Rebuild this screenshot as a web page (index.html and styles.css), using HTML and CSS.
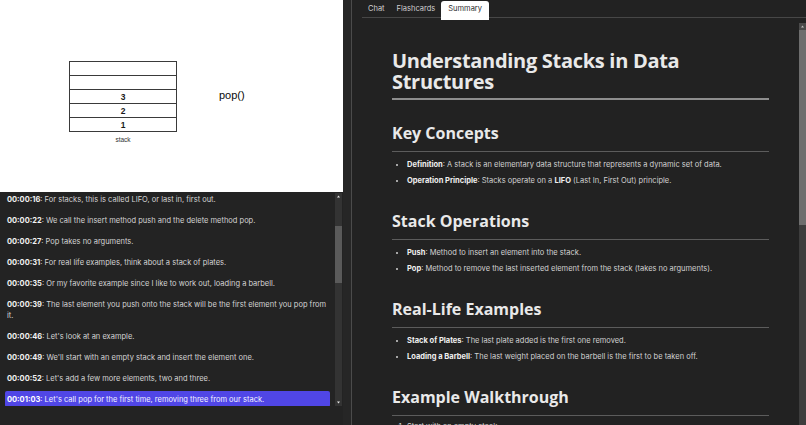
FILE: index.html
```html
<!DOCTYPE html>
<html lang="en">
<head>
<meta charset="utf-8">
<title>Stacks – Summary</title>
<link rel="stylesheet" href="styles.css">
</head>
<body>
<div class="app">
  <section class="left">
    <div class="video">
      <div class="stack-fig">
        <div class="stack-box">
          <div class="cell"></div>
          <div class="cell"></div>
          <div class="cell">3</div>
          <div class="cell">2</div>
          <div class="cell">1</div>
        </div>
        <div class="stack-label">stack</div>
      </div>
      <div class="pop-label">pop()</div>
    </div>
    <div class="transcript">
      <div class="t-list">
        <div class="t-item"><b>00:00:16</b>: For stacks, this is called LIFO, or last in, first out.</div>
        <div class="t-item"><b>00:00:22</b>: We call the insert method push and the delete method pop.</div>
        <div class="t-item"><b>00:00:27</b>: Pop takes no arguments.</div>
        <div class="t-item"><b>00:00:31</b>: For real life examples, think about a stack of plates.</div>
        <div class="t-item"><b>00:00:35</b>: Or my favorite example since I like to work out, loading a barbell.</div>
        <div class="t-item"><b>00:00:39</b>: The last element you push onto the stack will be the first element you pop from it.</div>
        <div class="t-item"><b>00:00:46</b>: Let's look at an example.</div>
        <div class="t-item"><b>00:00:49</b>: We'll start with an empty stack and insert the element one.</div>
        <div class="t-item"><b>00:00:52</b>: Let's add a few more elements, two and three.</div>
        <div class="t-item active"><b>00:01:03</b>: Let's call pop for the first time, removing three from our stack.</div>
      </div>
      <div class="sbar sbar-left">
        <div class="sbtn"><svg viewBox="0 0 7 7" width="7" height="7"><polygon points="2,4.5 5,4.5 3.5,2.5" fill="#e6e6e6"/></svg></div>
        <div class="strack"><div class="sthumb"></div></div>
        <div class="sbtn"><svg viewBox="0 0 7 7" width="7" height="7"><polygon points="2,2.5 5,2.5 3.5,4.5" fill="#e6e6e6"/></svg></div>
      </div>
    </div>
  </section>
  <div class="gutter"></div>
  <section class="right">
    <nav class="tabs">
      <div class="tab">Chat</div>
      <div class="tab">Flashcards</div>
      <div class="tab active">Summary</div>
    </nav>
    <div class="panel">
      <article class="summary">
        <h1>Understanding Stacks in Data Structures</h1>
        <h2>Key Concepts</h2>
        <ul>
          <li><b>Definition</b>: A stack is an elementary data structure that represents a dynamic set of data.</li>
          <li><b>Operation Principle</b>: Stacks operate on a <b>LIFO</b> (Last In, First Out) principle.</li>
        </ul>
        <h2>Stack Operations</h2>
        <ul>
          <li><b>Push</b>: Method to insert an element into the stack.</li>
          <li><b>Pop</b>: Method to remove the last inserted element from the stack (takes no arguments).</li>
        </ul>
        <h2>Real-Life Examples</h2>
        <ul>
          <li><b>Stack of Plates</b>: The last plate added is the first one removed.</li>
          <li><b>Loading a Barbell</b>: The last weight placed on the barbell is the first to be taken off.</li>
        </ul>
        <h2>Example Walkthrough</h2>
        <ol>
          <li>Start with an empty stack.</li>
          <li>Push 1, then 2, then 3.</li>
        </ol>
      </article>
      <div class="sbar sbar-right">
        <div class="sbtn"><svg viewBox="0 0 7 7" width="7" height="7"><polygon points="2,4.5 5,4.5 3.5,2.5" fill="#bdbdbd"/></svg></div>
        <div class="strack"><div class="sthumb"></div></div>
      </div>
    </div>
  </section>
</div>
</body>
</html>
```
FILE: styles.css
```css
html, body {
  margin: 0;
  padding: 0;
  overflow: hidden;
}
body {
  background: #222222;
  font-family: Inter, "Noto Sans", sans-serif;
  font-size: 7.5px;
  color: #d6d6d6;
  height: 425px;
}
.app {
  display: grid;
  grid-template-columns: 343px 8px 1fr;
  height: 425px;
  overflow: hidden;
}

/* ---------- left: video + transcript ---------- */
.left {
  display: flex;
  flex-direction: column;
  background: #232323;
}
.video {
  height: 192px;
  background: #ffffff;
  display: flex;
  align-items: flex-start;
  padding: 61px 0 0 69px;
  box-sizing: border-box;
  font-family: "Liberation Sans", Arial, sans-serif;
  color: #111;
}
.stack-fig {
  display: flex;
  flex-direction: column;
  align-items: center;
  width: 108px;
}
.stack-box {
  width: 108px;
  border: 1px solid #3a3a3a;
  border-bottom: none;
  box-sizing: border-box;
}
.cell {
  height: 13px;
  border-bottom: 1px solid #3a3a3a;
  display: flex;
  align-items: center;
  justify-content: center;
  font-weight: bold;
  font-size: 8.5px;
  color: #1a1a1a;
}
.stack-label {
  margin-top: 4px;
  font-size: 6.5px;
  color: #333;
}
.pop-label {
  margin: 28px 0 0 42px;
  font-size: 11px;
  line-height: 12px;
  color: #0a0a0a;
}

.transcript {
  height: 214px;
  display: flex;
  padding-right: 1px;
}
.t-list {
  flex: 1;
  overflow: hidden;
}
.t-item {
  margin: 0 5px 5px;
  padding: 2.5px 2px;
  line-height: 11px;
  border-radius: 2px;
  color: #d4d4d4;
}
.t-item:first-child {
  margin-top: -1px;
}
.t-item b {
  color: #f2f2f2;
  font-weight: 700;
}
.t-item.active {
  background: #5046e6;
  color: #f4f4ff;
}
.t-item.active b {
  color: #ffffff;
}

/* scrollbars */
.sbar {
  width: 7px;
  display: flex;
  flex-direction: column;
  background: #333333;
}
.sbtn {
  height: 7px;
  display: flex;
}
.strack {
  flex: 1;
  display: flex;
  flex-direction: column;
}
.sbar-left {
  margin-top: 1px;
}
.sbar-left .sthumb {
  margin-top: 26px;
  height: 57px;
  background: #5a5a5a;
}
.sbar-right {
  background: #3d3d3d;
}
.sbar-right .sbtn {
  background: #4a4a4a;
}
.sbar-right .sthumb {
  height: 195px;
  background: #6e6e6e;
}

.gutter {
  background: #262626;
}

/* ---------- right: tabs + summary ---------- */
.right {
  border-left: 1px solid #4b4b4b;
  display: flex;
  flex-direction: column;
  background: #222222;
  min-width: 0;
  min-height: 0;
}
.tabs {
  display: flex;
  margin: 1px 0 0 10px;
  height: 16px;
  border-bottom: 1px solid #474747;
}
.tab {
  padding: 0 6px;
  line-height: 16px;
  color: #d0d0d0;
}
.tab.active {
  background: #ffffff;
  color: #2b2b2b;
  border-radius: 3px 3px 0 0;
  height: 19px;
  margin-bottom: -3px;
  padding: 0 7px;
}
.panel {
  flex: 1;
  display: flex;
  margin-top: 5px;
  min-height: 0;
}
.summary {
  flex: 1;
  overflow: hidden;
  padding: 0 30px 0 40px;
}
.summary h1 {
  font-family: "Open Sans", sans-serif;
  font-weight: 700;
  letter-spacing: -0.3px;
  font-size: 20px;
  line-height: 21px;
  color: #e9e9e9;
  margin: 27px 0 0;
  padding-bottom: 6px;
  border-bottom: 2px solid #8e8e8e;
}
.summary h2 {
  font-family: "Open Sans", sans-serif;
  font-weight: 700;
  font-size: 16px;
  line-height: 17px;
  color: #e9e9e9;
  margin: 25px 0 0;
  padding-bottom: 9px;
  border-bottom: 1px solid #5c5c5c;
}
.summary ul + h2 {
  margin-top: 27px;
}
.summary ul, .summary ol {
  margin: 7px 0 0;
  padding-left: 15px;
}
.summary ol {
  margin-top: 5px;
}
.summary li {
  line-height: 11px;
  margin-bottom: 5px;
  color: #d2d2d2;
}
.summary li b {
  color: #f0f0f0;
}
```
